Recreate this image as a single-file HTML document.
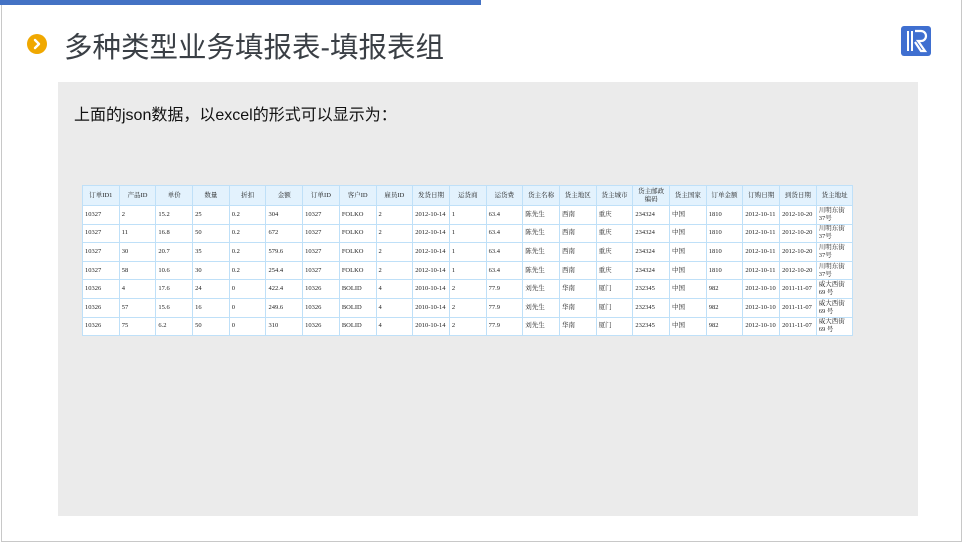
<!DOCTYPE html>
<html><head><meta charset="utf-8"><style>
*{margin:0;padding:0;box-sizing:border-box}
body{width:964px;height:544px;background:#fff;position:relative;overflow:hidden;font-family:"Liberation Sans","Noto Sans CJK SC",sans-serif}
.frame{position:absolute;left:1px;top:0;width:961px;height:542px;border-left:1px solid #c8c8c8;border-right:1px solid #c8c8c8;border-bottom:1px solid #c8c8c8}
.bar{position:absolute;left:0;top:0;width:481px;height:5px;background:#4472c4}
.dot{position:absolute;left:27px;top:34px;width:20px;height:20px}
.title{position:absolute;left:64px;top:25px;font-size:28.5px;color:#3a3f45;white-space:nowrap}
.logo{position:absolute;left:901px;top:26px;width:30px;height:30px;background:#3f6fd0;border-radius:3px}
.panel{position:absolute;left:58px;top:82px;width:860px;height:434px;background:#ebebeb}
.sub{position:absolute;left:74px;top:101px;font-size:16px;color:#111}
table{position:absolute;left:82px;top:185px;border-collapse:collapse;background:#fff;font-family:"Liberation Serif","Noto Serif CJK SC",serif;font-size:6.5px;color:#222;table-layout:fixed;width:770px}
td{border:1px solid #bfe0f8;height:18.6px;padding:0 2px;vertical-align:middle;overflow:hidden;line-height:8px;width:36.7px}
tr.h td{background:#e3f2fd;height:20px;text-align:center}
</style></head><body>
<div class="frame"></div>
<div class="bar"></div>
<svg class="dot" viewBox="0 0 20 20"><circle cx="10" cy="10" r="10" fill="#f0a800"/><path d="M8 6l4 4-4 4" fill="none" stroke="#fff" stroke-width="2.4" stroke-linecap="round" stroke-linejoin="round"/></svg>
<div class="title">多种类型业务填报表-填报表组</div>
<div class="logo"><svg width="30" height="30" viewBox="0 0 30 30"><rect x="6" y="5" width="2" height="20" fill="#fff"/><rect x="10" y="5" width="2" height="20" fill="#fff"/><path d="M14 5h6a5 5 0 0 1 0 10h-3l7 10h-4l-6-9" fill="none" stroke="#fff" stroke-width="2.2"/></svg></div>
<div class="panel"></div>
<div class="sub">上面的json数据，以excel的形式可以显示为：</div>
<table>
<tr class="h"><td>订单ID1</td><td>产品ID</td><td>单价</td><td>数量</td><td>折扣</td><td>金额</td><td>订单ID</td><td>客户ID</td><td>雇员ID</td><td>发货日期</td><td>运货商</td><td>运货费</td><td>货主名称</td><td>货主地区</td><td>货主城市</td><td>货主邮政编码</td><td>货主国家</td><td>订单金额</td><td>订购日期</td><td>到货日期</td><td>货主地址</td></tr>
<tr><td>10327</td><td>2</td><td>15.2</td><td>25</td><td>0.2</td><td>304</td><td>10327</td><td>FOLKO</td><td>2</td><td>2012-10-14</td><td>1</td><td>63.4</td><td>陈先生</td><td>西南</td><td>重庆</td><td>234324</td><td>中国</td><td>1810</td><td>2012-10-11</td><td>2012-10-20</td><td>川明东街37号</td></tr>
<tr><td>10327</td><td>11</td><td>16.8</td><td>50</td><td>0.2</td><td>672</td><td>10327</td><td>FOLKO</td><td>2</td><td>2012-10-14</td><td>1</td><td>63.4</td><td>陈先生</td><td>西南</td><td>重庆</td><td>234324</td><td>中国</td><td>1810</td><td>2012-10-11</td><td>2012-10-20</td><td>川明东街37号</td></tr>
<tr><td>10327</td><td>30</td><td>20.7</td><td>35</td><td>0.2</td><td>579.6</td><td>10327</td><td>FOLKO</td><td>2</td><td>2012-10-14</td><td>1</td><td>63.4</td><td>陈先生</td><td>西南</td><td>重庆</td><td>234324</td><td>中国</td><td>1810</td><td>2012-10-11</td><td>2012-10-20</td><td>川明东街37号</td></tr>
<tr><td>10327</td><td>58</td><td>10.6</td><td>30</td><td>0.2</td><td>254.4</td><td>10327</td><td>FOLKO</td><td>2</td><td>2012-10-14</td><td>1</td><td>63.4</td><td>陈先生</td><td>西南</td><td>重庆</td><td>234324</td><td>中国</td><td>1810</td><td>2012-10-11</td><td>2012-10-20</td><td>川明东街37号</td></tr>
<tr><td>10326</td><td>4</td><td>17.6</td><td>24</td><td>0</td><td>422.4</td><td>10326</td><td>BOLID</td><td>4</td><td>2010-10-14</td><td>2</td><td>77.9</td><td>刘先生</td><td>华南</td><td>厦门</td><td>232345</td><td>中国</td><td>982</td><td>2012-10-10</td><td>2011-11-07</td><td>威大西街69 号</td></tr>
<tr><td>10326</td><td>57</td><td>15.6</td><td>16</td><td>0</td><td>249.6</td><td>10326</td><td>BOLID</td><td>4</td><td>2010-10-14</td><td>2</td><td>77.9</td><td>刘先生</td><td>华南</td><td>厦门</td><td>232345</td><td>中国</td><td>982</td><td>2012-10-10</td><td>2011-11-07</td><td>威大西街69 号</td></tr>
<tr><td>10326</td><td>75</td><td>6.2</td><td>50</td><td>0</td><td>310</td><td>10326</td><td>BOLID</td><td>4</td><td>2010-10-14</td><td>2</td><td>77.9</td><td>刘先生</td><td>华南</td><td>厦门</td><td>232345</td><td>中国</td><td>982</td><td>2012-10-10</td><td>2011-11-07</td><td>威大西街69 号</td></tr>
</table>
</body></html>
